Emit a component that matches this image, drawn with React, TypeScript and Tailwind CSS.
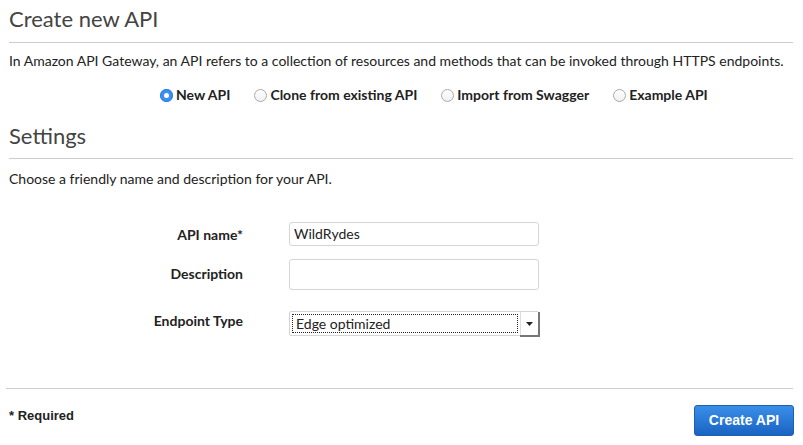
import React from 'react';

const lato = { fontFamily: 'Lato, "Open Sans", sans-serif' };

const Radio = ({ checked, label }: { checked?: boolean; label: string }) => (
  <label className="flex items-center gap-[3px] text-[14px] font-bold text-[#222] leading-[20px]">
    {checked ? (
      <span className="w-[13px] h-[13px] rounded-full bg-[#3b8ff0] flex items-center justify-center shadow-[inset_0_0_0_1px_#2f7fe0]">
        <span className="w-[5px] h-[5px] rounded-full bg-white" />
      </span>
    ) : (
      <span className="w-[13px] h-[13px] rounded-full border border-[#aaa] bg-gradient-to-b from-white to-[#f0f0f0]" />
    )}
    <span>{label}</span>
  </label>
);

const Row = ({ label, children, className, labelClass }: { label: string; children: React.ReactNode; className?: string; labelClass?: string }) => (
  <div className={`flex items-center ${className ?? ''}`}>
    <div className={`w-[234px] text-right text-[14px] font-bold text-[#222] ${labelClass ?? ''}`}>{label}</div>
    <div className="ml-[46px]">{children}</div>
  </div>
);

export default function App() {
  return (
    <div className="w-[803px] h-[445px] bg-white overflow-hidden pl-[9px] pr-[10px]" style={lato}>
      <h1 className="pt-[5px] pb-[9px] text-[22px] leading-[28px] text-[#444] border-b border-[#cccccc]">
        Create new API
      </h1>
      <p className="mt-[8px] text-[14px] leading-[20px] text-[#222]">
        In Amazon API Gateway, an API refers to a collection of resources and methods that can be invoked through HTTPS endpoints.
      </p>
      <div className="mt-[14px] flex items-center pl-[151px] gap-[24px]">
        <Radio checked label="New API" />
        <Radio label="Clone from existing API" />
        <Radio label="Import from Swagger" />
        <Radio label="Example API" />
      </div>
      <h2 className="mt-[17px] pb-[8px] text-[22px] leading-[28px] text-[#444] border-b border-[#cccccc]">
        Settings
      </h2>
      <p className="mt-[10px] text-[14px] leading-[20px] text-[#222]">
        Choose a friendly name and description for your API.
      </p>

      <Row label="API name*" className="mt-[33px]">
        <div className="w-[250px] h-[24px] border border-[#d5d5d5] rounded-[3px] px-[4px] text-[14px] leading-[22px] text-[#222]">
          WildRydes
        </div>
      </Row>
      <Row label="Description" className="mt-[13px]" labelClass="-translate-y-[1px]">
        <div className="w-[250px] h-[31px] border border-[#d5d5d5] rounded-[3px]" />
      </Row>
      <Row label="Endpoint Type" className="mt-[21px]" labelClass="-translate-y-[3px]">
        <div className="w-[250px] h-[25px] border border-[#d5d5d5] rounded-[2px] flex items-stretch bg-white">
          <div className="flex-1 m-[2px] border border-dotted border-[#222] text-[14px] leading-[18px] text-[#222] pl-[3px]">
            Edge optimized
          </div>
          <div className="w-[18px] flex items-center justify-center border-l border-[#ddd] shadow-[1px_1px_0_1px_#777]">
            <svg width="7" height="4" viewBox="0 0 7 4">
              <path d="M0 0 H7 L3.5 4 Z" fill="#222" />
            </svg>
          </div>
        </div>
      </Row>

      <div className="mt-[52px] border-t border-[#cccccc] -ml-[3px]" />
      <div className="flex justify-between items-start">
        <div className="mt-[17px] text-[13px] font-bold text-[#222]" style={{ fontFamily: '"Liberation Sans", Arial, sans-serif' }}>
          * Required
        </div>
        <button
          className="mt-[16px] -mr-[1px] w-[100px] h-[31px] rounded-[3px] border border-[#1b5fae] bg-gradient-to-b from-[#3a8fe8] to-[#1a63c2] text-white text-[14px] font-bold"
          style={{ fontFamily: '"Liberation Sans", Arial, sans-serif' }}
        >
          Create API
        </button>
      </div>
    </div>
  );
}
